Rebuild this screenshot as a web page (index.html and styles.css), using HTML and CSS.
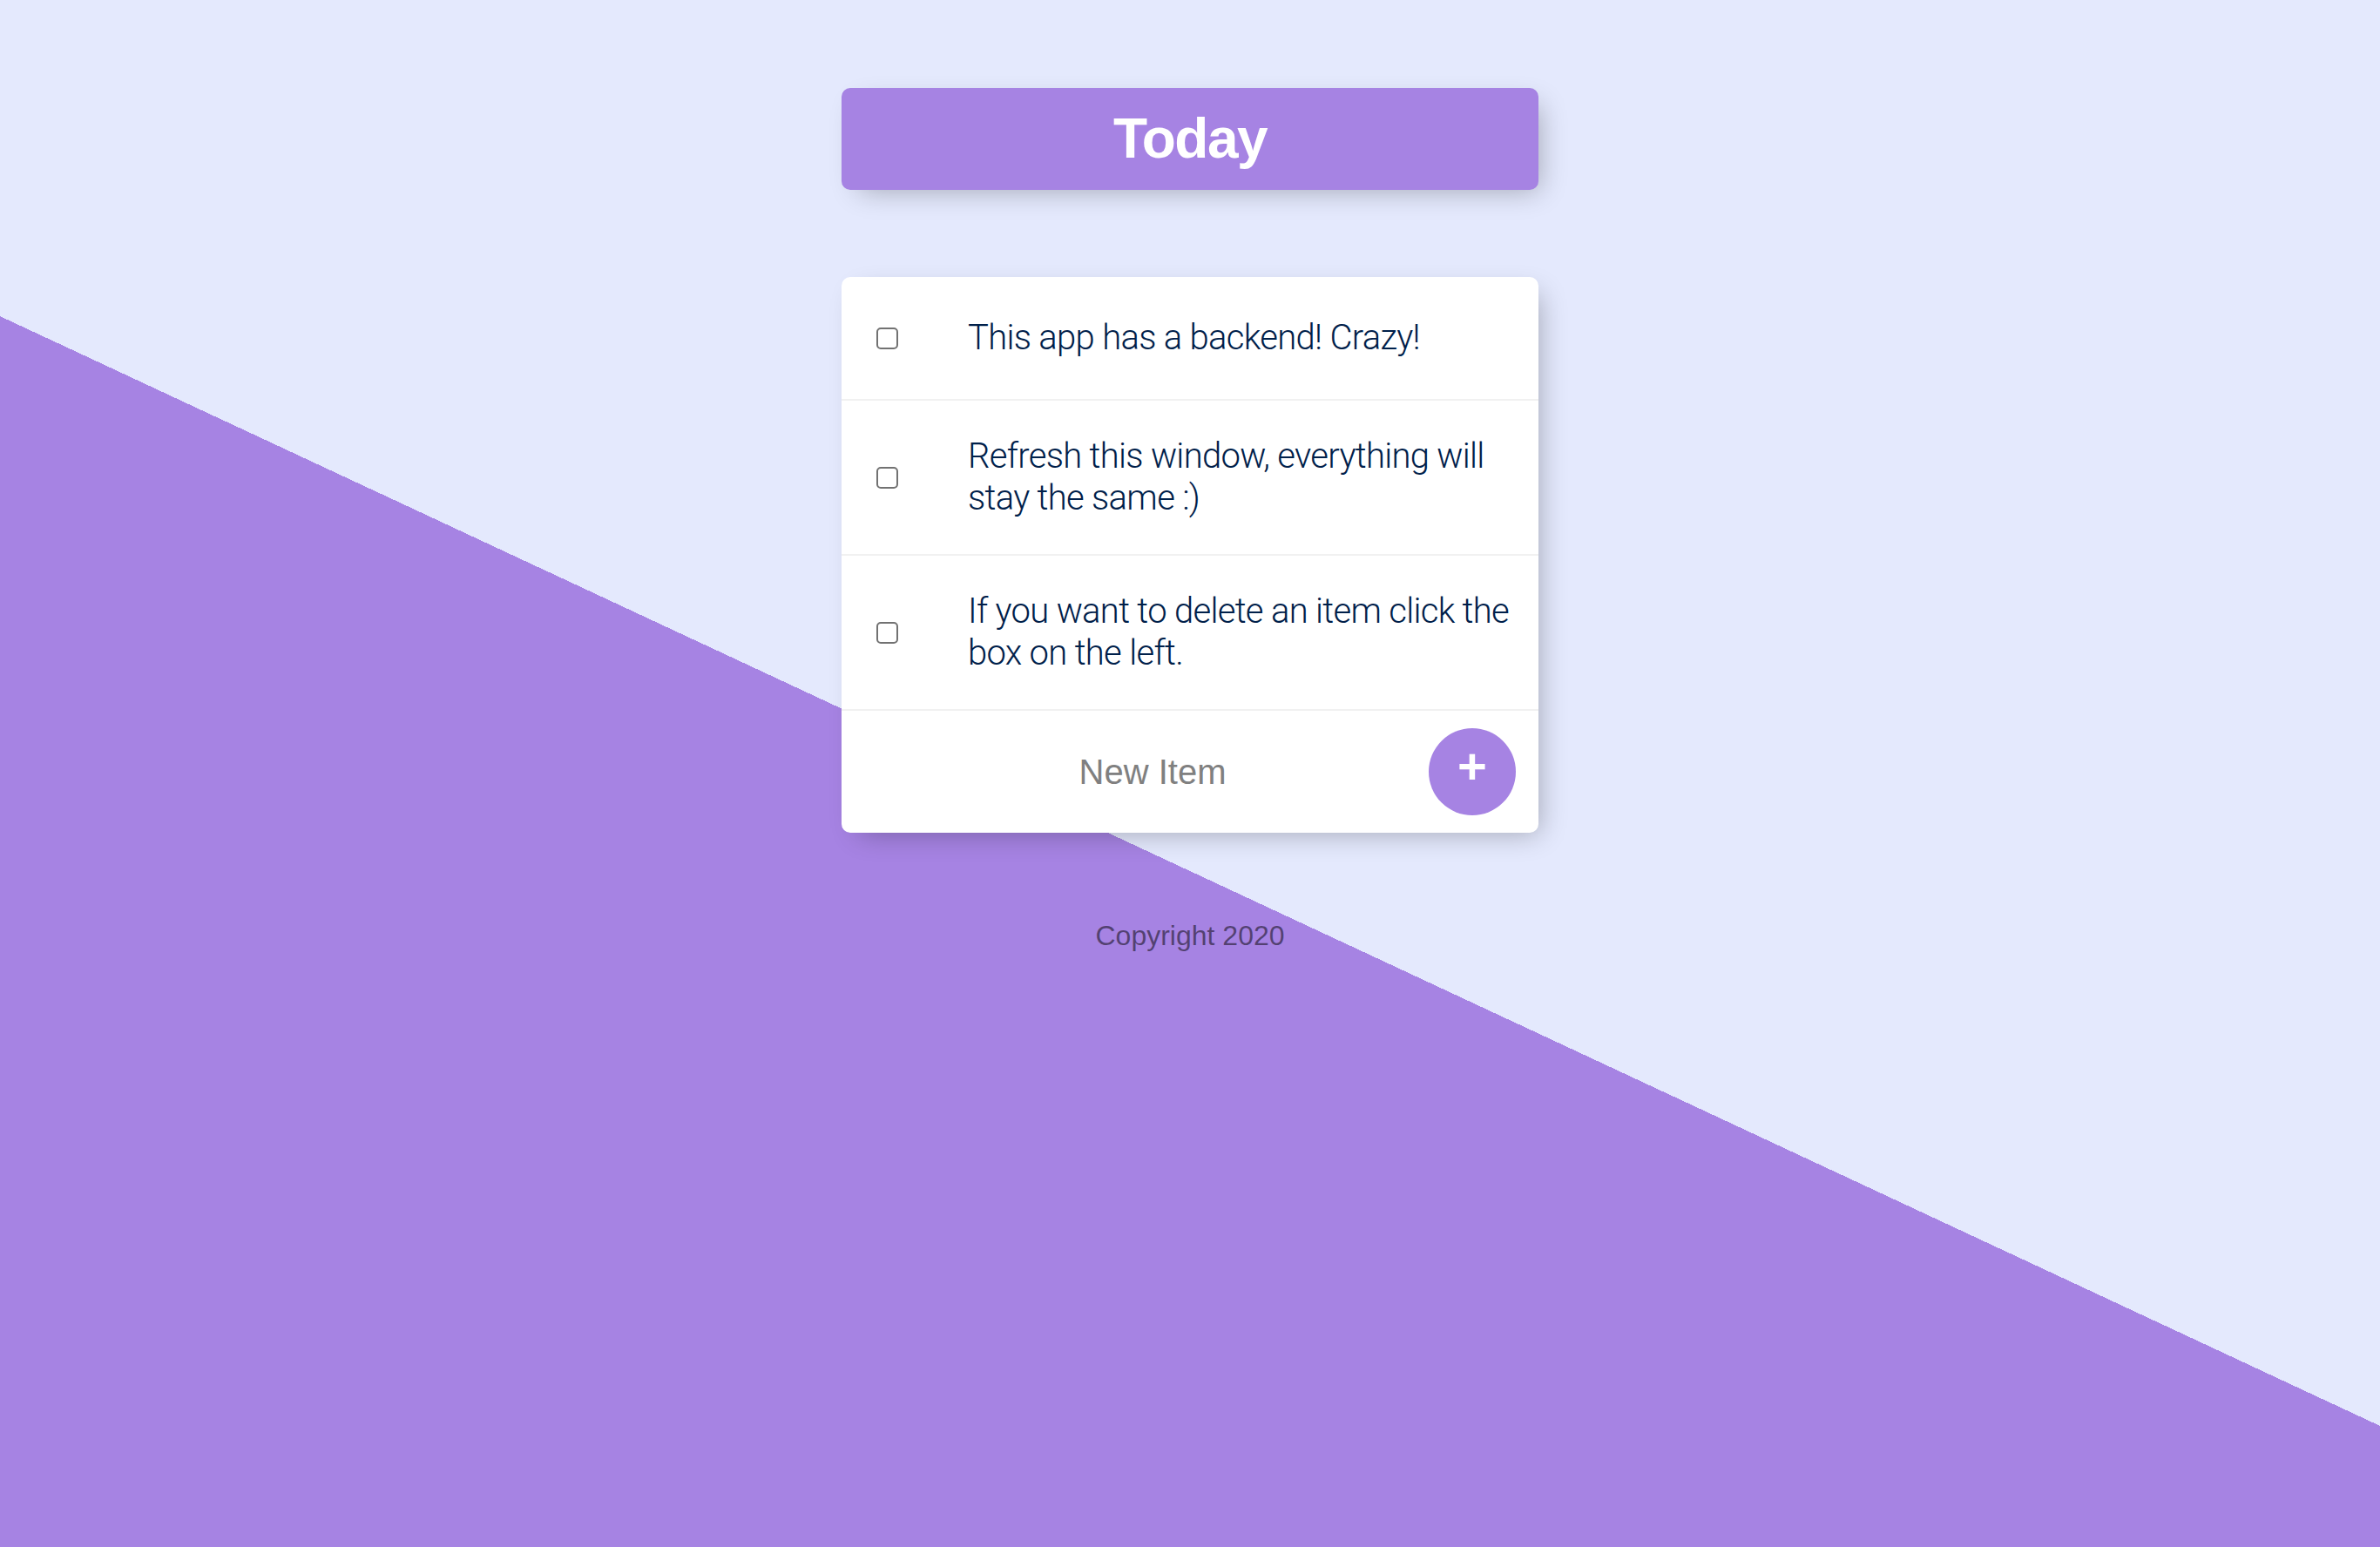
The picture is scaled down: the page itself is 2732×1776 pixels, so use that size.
FILE: index.html
```html
<!DOCTYPE html>
<html lang="en" class="page">
<head>
<meta charset="utf-8">
<title>To Do List</title>
<link rel="stylesheet" href="styles.css">
</head>
<body class="page-body">
  <div class="box heading">
    <h1 class="heading-title">Today</h1>
  </div>
  <div class="box list">
    <div class="item">
      <input type="checkbox" class="check">
      <p class="item-text">This app has a backend! Crazy!</p>
    </div>
    <div class="item">
      <input type="checkbox" class="check">
      <p class="item-text">Refresh this window, everything will stay the same :)</p>
    </div>
    <div class="item">
      <input type="checkbox" class="check">
      <p class="item-text">If you want to delete an item click the box on the left.</p>
    </div>
    <form class="item new-item-form" action="#" onsubmit="return false;">
      <input type="text" class="new-item-input" name="newItem" placeholder="New Item" autocomplete="off">
      <button type="submit" class="add-button">+</button>
    </form>
  </div>
  <footer class="footer">Copyright 2020</footer>
</body>
</html>
```
FILE: styles.css
```css
html.page {
  background-color: #E4E9FD;
  background-image: linear-gradient(25deg, #A683E3 50%, #E4E9FD 50%);
  min-height: 2000px;
  font-family: "Liberation Sans", Arial, sans-serif;
}

.page-body {
  margin: 0 16px 16px;
  padding-top: 1px;
}

.box {
  max-width: 800px;
  margin: 100px auto;
  background: #ffffff;
  border-radius: 10px;
  box-shadow: 10px 10px 30px -10px rgba(0, 0, 0, 0.3);
}

.heading {
  background-color: #A683E3;
  text-align: center;
}

.heading-title {
  margin: 0;
  padding: 20px;
  color: #ffffff;
  font-size: 64px;
  line-height: 77px;
  font-weight: 700;
  letter-spacing: -1.5px;
}

.item {
  min-height: 140px;
  display: flex;
  align-items: center;
  border-bottom: 2px solid #F1F1F1;
}

.item:last-child {
  border-bottom: 0;
}

.check {
  appearance: none;
  -webkit-appearance: none;
  flex: none;
  width: 25px;
  height: 25px;
  margin: 40px;
  border: 2px solid #727272;
  border-radius: 5px;
  background: #ffffff;
  box-sizing: border-box;
}

.item-text {
  margin: 0;
  padding: 40px 20px 40px 40px;
  font-family: Roboto, "Liberation Sans", sans-serif;
  font-size: 40px;
  line-height: 48px;
  font-weight: 300;
  letter-spacing: -0.7px;
  color: #00204a;
}

.new-item-form {
  text-align: center;
  margin-left: 40px;
}

.new-item-input {
  text-align: center;
  height: 120px;
  padding: 2px 4px;
  border: none;
  background: transparent;
  font-family: "Liberation Sans", Arial, sans-serif;
  font-size: 40px;
  font-weight: 400;
  width: 626px;
  color: #00204a;
}

.new-item-input:focus {
  outline: none;
  box-shadow: inset 0 -6px 0 0 #A683E3;
}

.new-item-input::placeholder {
  color: grey;
  opacity: 1;
}

.add-button {
  flex: none;
  height: 100px;
  width: 100px;
  border-radius: 50%;
  border: 0;
  background-color: #A683E3;
  color: #ffffff;
  font-family: "Liberation Sans", Arial, sans-serif;
  font-size: 58px;
  font-weight: 700;
  line-height: 1;
  padding: 0 0 12px;
}

.footer {
  color: rgba(0, 0, 0, 0.5);
  text-align: center;
  font-size: 32px;
  line-height: 37px;
}
```
